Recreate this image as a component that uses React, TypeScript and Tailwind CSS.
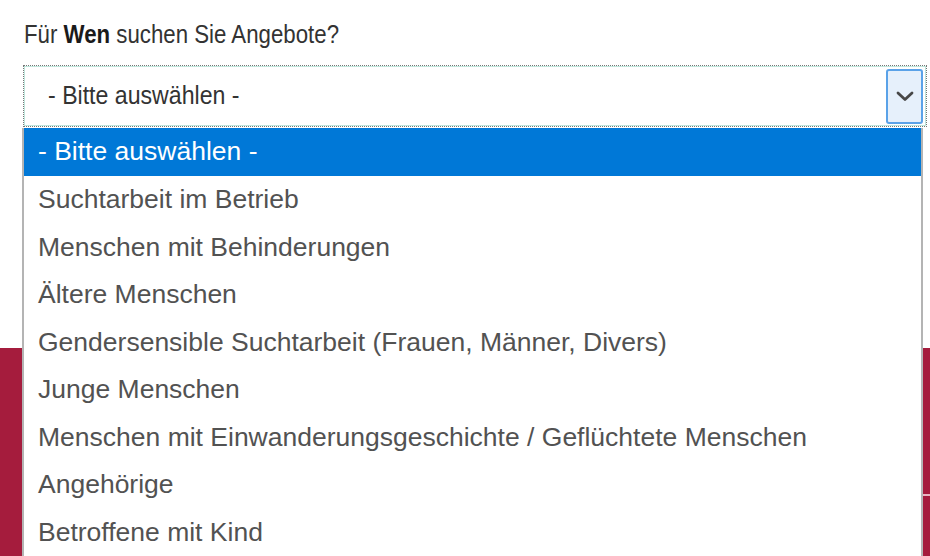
const options = [
  "Suchtarbeit im Betrieb",
  "Menschen mit Behinderungen",
  "Ältere Menschen",
  "Gendersensible Suchtarbeit (Frauen, Männer, Divers)",
  "Junge Menschen",
  "Menschen mit Einwanderungsgeschichte / Geflüchtete Menschen",
  "Angehörige",
  "Betroffene mit Kind",
];

function Chevron() {
  return (
    <svg width="20" height="12" viewBox="0 0 20 12" fill="none">
      <path d="M3 3l7 6.5 7-6.5" stroke="#474747" strokeWidth="2.8" strokeLinecap="round" strokeLinejoin="round" />
    </svg>
  );
}

export default function App() {
  return (
    <div className="relative w-[930px] h-[556px] overflow-hidden bg-white">
      <div className="pl-[24px] pt-[20px] h-[65px] text-[25px] leading-[28px] text-[#333] font-['Liberation_Sans',Arial,sans-serif]">
        <span className="inline-block origin-left scale-x-[0.89] whitespace-nowrap">
          Für <span className="font-bold text-[#1a1a1a]">Wen</span> suchen Sie Angebote?
        </span>
      </div>

      <div className="ml-[23px] w-[904px] h-[62px] border border-dotted border-[#777] bg-white">
        <div className="flex items-center justify-between h-full border border-[#bfe6dc] pl-[23px] pr-[2px]">
          <span className="inline-block origin-left scale-x-[0.925] whitespace-nowrap text-[25px] text-[#333] font-['Liberation_Sans',Arial,sans-serif]">
            - Bitte auswählen -
          </span>
          <div className="flex items-center justify-center w-[37px] h-[55px] rounded-[3px] border-2 border-[#5aa2e8] bg-[#e6f0fb]">
            <Chevron />
          </div>
        </div>
      </div>

      <div className="h-[221px]" />

      <div className="h-[208px] bg-[#a51c3d] flex flex-col">
        <div className="h-[146px]" />
        <div className="h-[2px] bg-[#e8b7c3] ml-[920px]" />
      </div>

      <div className="absolute left-[22px] top-[128px] w-[901px] bg-white border-x-2 border-[#b4b4b4] font-['Liberation_Sans',Arial,sans-serif] text-[26.5px]">
        <div className="h-[48px] flex items-center pl-[14px] bg-[#0078d7] text-white">- Bitte auswählen -</div>
        {options.map((o) => (
          <div key={o} className="h-[47.6px] flex items-center pl-[14px] text-[#525252]">
            {o}
          </div>
        ))}
      </div>
    </div>
  );
}
